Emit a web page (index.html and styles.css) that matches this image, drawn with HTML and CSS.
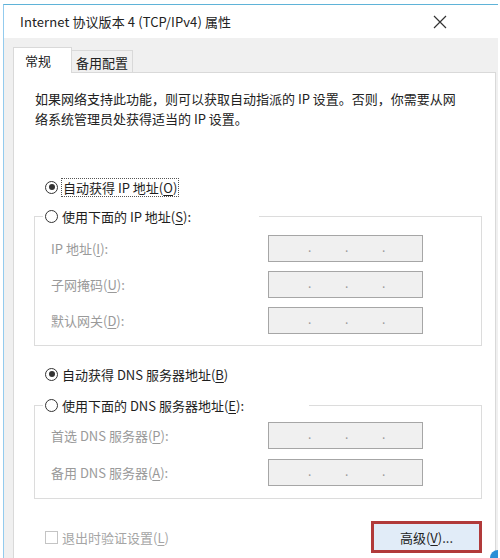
FILE: index.html
```html
<!DOCTYPE html>
<html lang="zh-CN">
<head>
<meta charset="utf-8">
<title>Internet 协议版本 4 (TCP/IPv4) 属性</title>
<link rel="stylesheet" href="styles.css">
</head>
<body>
<div class="window">
  <div class="titlebar">
    <span class="title">Internet 协议版本 4 (TCP/IPv4) 属性</span>
    <svg class="close" width="14" height="14" viewBox="0 0 14 14"><path d="M1 1 L13 13 M13 1 L1 13" stroke="#333" stroke-width="1.2" fill="none"/></svg>
  </div>
  <div class="body">
    <div class="tabs">
      <div class="tab active">常规</div>
      <div class="tab">备用配置</div>
    </div>
    <div class="panel">
      <p class="intro">如果网络支持此功能，则可以获取自动指派的 IP 设置。否则，你需要从网<br>络系统管理员处获得适当的 IP 设置。</p>

      <div class="radio-row">
        <span class="radio checked"></span>
        <span class="focus">自动获得 IP 地址(<u>O</u>)</span>
      </div>

      <fieldset class="group group-ip">
        <legend class="legend legend-ip"><span class="radio"></span><span>使用下面的 IP 地址(<u>S</u>):</span></legend>
        <div class="field"><span class="label">IP 地址(<u>I</u>):</span><span class="ipbox"><i>.</i><i>.</i><i>.</i></span></div>
        <div class="field"><span class="label">子网掩码(<u>U</u>):</span><span class="ipbox"><i>.</i><i>.</i><i>.</i></span></div>
        <div class="field"><span class="label">默认网关(<u>D</u>):</span><span class="ipbox"><i>.</i><i>.</i><i>.</i></span></div>
      </fieldset>

      <div class="radio-row dns-auto">
        <span class="radio checked"></span>
        <span>自动获得 DNS 服务器地址(<u>B</u>)</span>
      </div>

      <fieldset class="group group-dns">
        <legend class="legend legend-dns"><span class="radio"></span><span>使用下面的 DNS 服务器地址(<u>E</u>):</span></legend>
        <div class="field"><span class="label">首选 DNS 服务器(<u>P</u>):</span><span class="ipbox"><i>.</i><i>.</i><i>.</i></span></div>
        <div class="field"><span class="label">备用 DNS 服务器(<u>A</u>):</span><span class="ipbox"><i>.</i><i>.</i><i>.</i></span></div>
      </fieldset>

      <div class="bottom-row">
        <div class="check">
          <span class="checkbox"></span>
          <span>退出时验证设置(<u>L</u>)</span>
        </div>
        <div class="btn">高级(<u>V</u>)...</div>
      </div>
    </div>
  </div>
  <span class="corner"></span>
</div>
</body>
</html>
```

FILE: styles.css
```css
html, body {
  margin: 0;
  padding: 0;
  background: #ffffff;
  overflow: hidden;
}
body {
  font-family: "Noto Sans CJK SC", "Noto Sans", sans-serif;
  font-size: 13px;
  color: #1e1e1e;
}
.window {
  position: relative;
  margin: 4px 0 0 3px;
  width: 495px;
  height: 554px;
  border-top: 1px solid #5fb3d8;
  border-left: 1px solid #93cbee;
  box-sizing: border-box;
  background: #f0f0f0;
  overflow: hidden;
}
.titlebar {
  height: 33px;
  background: #ffffff;
  display: flex;
  align-items: center;
  justify-content: space-between;
  padding: 0 51px 0 16px;
}
.title {
  font-size: 13px;
  color: #222;
  letter-spacing: 0.1px;
}
.close {
  display: block;
  margin-top: 1px;
}
.body {
  padding: 9px 2px 0 9px;
}
.tabs {
  display: flex;
  align-items: flex-end;
  height: 25px;
  position: relative;
  z-index: 1;
}
.tab {
  box-sizing: border-box;
  height: 22px;
  width: 61px;
  border: 1px solid #d9d9d9;
  border-bottom: none;
  border-left: none;
  background: #f0f0f0;
  display: flex;
  align-items: center;
  justify-content: center;
  color: #222;
  font-size: 13px;
  padding-top: 1px;
}
.tab.active {
  height: 26px;
  width: 59px;
  background: #ffffff;
  border-left: 1px solid #d9d9d9;
  border-right: 1px solid #d9d9d9;
  margin-bottom: -1px;
  justify-content: flex-start;
  padding-left: 11px;
  padding-top: 0;
}
.panel {
  background: #ffffff;
  border: 1px solid #d9d9d9;
  height: 520px;
  box-sizing: border-box;
  padding: 0 0 0 21px;
}
.intro {
  margin: 16px 0 0 0;
  line-height: 20px;
  font-size: 13px;
  color: #222;
}
.radio-row {
  display: flex;
  align-items: center;
  height: 18px;
  margin: 49px 0 0 10px;
  gap: 4px;
}
.radio {
  box-sizing: border-box;
  width: 13px;
  height: 13px;
  border: 1px solid #333;
  border-radius: 50%;
  background: #fff;
  display: inline-block;
  flex: none;
  position: relative;
}
.radio.checked::after {
  content: "";
  position: absolute;
  left: 2.5px;
  top: 2.5px;
  width: 6px;
  height: 6px;
  border-radius: 50%;
  background: #333;
}
.focus {
  outline: 1px dotted #555;
  outline-offset: 0;
  padding: 0 1px;
  line-height: 17px;
}
u {
  text-decoration: underline;
  text-underline-offset: 2px;
}
.group {
  margin: 11px 13px 0 -1px;
  border: 1px solid #dcdcdc;
  padding: 0 0 11px 0;
  min-width: 0;
}
.legend {
  padding: 0 0 0 2px;
  margin-left: 8px;
  height: 18px;
  display: flex;
  align-items: center;
  gap: 4px;
  background: #fff;
}
.legend-ip { width: 214px; }
.legend-dns { width: 264px; }
.group-ip { padding-top: 10px; }
.group-dns { margin-top: 13px; padding-top: 8px; padding-bottom: 12px; }
.field {
  display: flex;
  align-items: center;
  height: 27px;
  padding-left: 16px;
}
.group-ip .field + .field { margin-top: 9px; }
.group-dns .field + .field { margin-top: 10px; }
.label {
  width: 217px;
  color: #9a9a9a;
  font-size: 13px;
}
.ipbox {
  box-sizing: border-box;
  width: 155px;
  height: 27px;
  border: 1px solid #a6a6a6;
  background: #f0f0f0;
  display: flex;
  align-items: center;
  padding-left: 39px;
  gap: 34px;
}
.ipbox i {
  font-style: normal;
  color: #9a9a9a;
  font-size: 12px;
  width: 3px;
  line-height: 1;
  margin-top: -4px;
}
.dns-auto {
  margin-top: 19px;
}
.bottom-row {
  display: flex;
  align-items: center;
  justify-content: space-between;
  margin: 22px 13px 0 0;
}
.check {
  display: flex;
  align-items: center;
  gap: 4px;
  margin-left: 10px;
  color: #a5a5a5;
}
.checkbox {
  box-sizing: border-box;
  width: 13px;
  height: 13px;
  border: 1px solid #c4c4c4;
  background: #fff;
}
.btn {
  box-sizing: border-box;
  width: 111px;
  height: 32px;
  border: 3px solid #b13a3a;
  background: #e1ecf8;
  display: flex;
  align-items: center;
  justify-content: center;
  color: #222;
  font-size: 13px;
}
.corner {
  position: absolute;
  right: -8px;
  bottom: -8px;
  width: 16px;
  height: 16px;
  border-radius: 50%;
  background: #2b8fd6;
}
```
